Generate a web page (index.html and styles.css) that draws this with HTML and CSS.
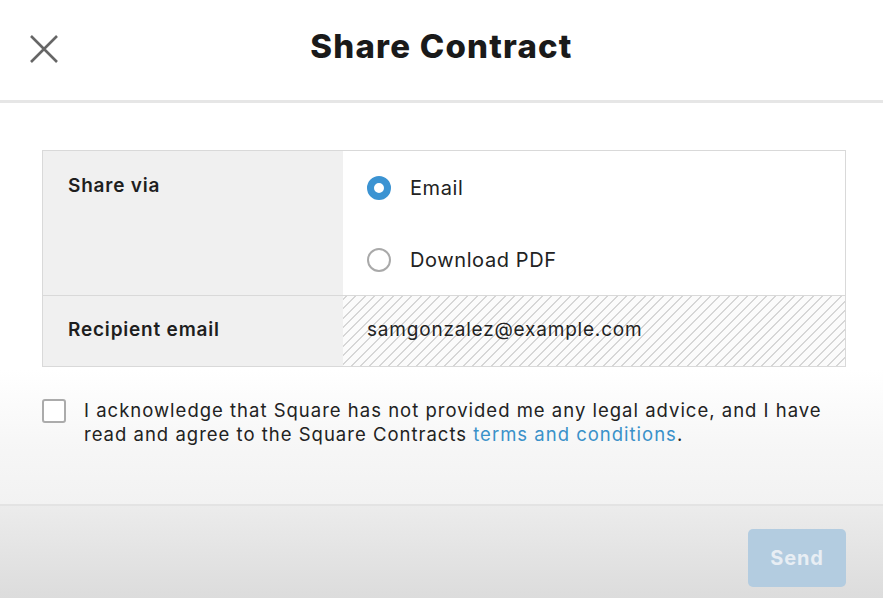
FILE: index.html
```html
<!DOCTYPE html>
<html>
<head>
<meta charset="utf-8">
<link rel="stylesheet" href="styles.css">
</head>
<body>
<div class="modal">
  <header class="header">
    <button class="close" aria-label="Close">
      <svg width="30" height="30" viewBox="0 0 30 30"><path d="M2 2 L28 28 M28 2 L2 28" stroke="#666" stroke-width="2.6" fill="none"/></svg>
    </button>
    <h1 class="title">Share Contract</h1>
  </header>
  <main class="content">
    <div class="table">
      <div class="row row-via">
        <div class="label">Share via</div>
        <div class="value options">
          <label class="option"><span class="radio checked"></span>Email</label>
          <label class="option"><span class="radio"></span>Download PDF</label>
        </div>
      </div>
      <div class="row row-email">
        <div class="label">Recipient email</div>
        <div class="value hatched">samgonzalez@example.com</div>
      </div>
    </div>
    <div class="ack">
      <span class="checkbox"></span>
      <p class="ack-text">I acknowledge that Square has not provided me any legal advice, and I have read and agree to the Square Contracts <a class="link">terms and conditions</a>.</p>
    </div>
  </main>
  <footer class="footer">
    <button class="send">Send</button>
  </footer>
</div>
</body>
</html>
```

FILE: styles.css
```css
* { box-sizing: border-box; }
html, body { margin: 0; padding: 0; }
body {
  width: 883px;
  height: 598px;
  overflow: hidden;
  font-family: Inter, "Noto Sans", sans-serif;
  color: #1e1e1e;
  background: #fff;
}
.modal {
  height: 598px;
  display: flex;
  flex-direction: column;
  background: linear-gradient(to bottom, #ffffff 0px, #ffffff 370px, #f7f7f7 440px, #f2f2f2 504px, #ececec 504px, #dcdcdc 598px);
}
.header {
  height: 103px;
  display: flex;
  align-items: center;
  justify-content: center;
  position: relative;
  border-bottom: 3px solid #e6e6e6;
  background: #fff;
}
.close {
  position: absolute;
  left: 29px;
  top: 34px;
  width: 30px;
  height: 30px;
  padding: 0;
  border: 0;
  background: none;
}
.close svg { display: block; }
.title {
  margin: 0;
  margin-top: -8px;
  font-size: 33px;
  font-weight: 800;
  letter-spacing: 1.2px;
  color: #1a1a1a;
}
.content {
  flex: 1;
  padding: 47px 37px 0 42px;
}
.table {
  border: 1px solid #d9d9d9;
}
.row {
  display: flex;
}
.row-via { height: 145px; border-bottom: 1px solid #d9d9d9; }
.row-email { height: 70px; }
.label {
  width: 300px;
  background: #f0f0f0;
  font-size: 19px;
  font-weight: 600;
  letter-spacing: 0.8px;
  padding: 23px 0 0 25px;
}
.row-email .label { padding-top: 22px; }
.value {
  flex: 1;
  background: #fff;
}
.options {
  display: flex;
  flex-direction: column;
  padding: 24px 0 0 24px;
  gap: 47px;
}
.option {
  display: flex;
  align-items: center;
  font-size: 20px;
  letter-spacing: 0.6px;
  height: 25px;
  color: #222;
}
.radio {
  width: 24px;
  height: 24px;
  border-radius: 50%;
  border: 2.5px solid #a9a9a9;
  margin-right: 19px;
  background: #fff;
}
.radio.checked {
  border: 7.5px solid #3b93d2;
}
.hatched {
  background: repeating-linear-gradient(-45deg, #fbfbfb 0px, #fbfbfb 5.4px, #d6d6d6 5.4px, #d6d6d6 6.6px);
  font-size: 19px;
  letter-spacing: 0.8px;
  padding: 22px 0 0 24px;
  color: #222;
}
.ack {
  display: flex;
  margin-top: 31px;
}
.checkbox {
  width: 24px;
  height: 24px;
  border: 2.5px solid #ababab;
  border-radius: 3px;
  background: #fff;
  flex: none;
  margin-top: 1px;
}
.ack-text {
  margin: 0 0 0 18px;
  font-size: 18.5px;
  letter-spacing: 1px;
  line-height: 24px;
  color: #222;
}
.link { color: #3a91c9; text-decoration: none; }
.footer {
  height: 94px;
  display: flex;
  justify-content: flex-end;
  align-items: flex-start;
  padding: 23px 37px 0 0;
  border-top: 2px solid #e3e3e3;
}
.send {
  width: 98px;
  height: 58px;
  border: 0;
  border-radius: 5px;
  background: #b3cce0;
  color: #e8eef4;
  font-family: Inter, "Noto Sans", sans-serif;
  font-size: 20px;
  letter-spacing: 0.8px;
  font-weight: 700;
}
```
